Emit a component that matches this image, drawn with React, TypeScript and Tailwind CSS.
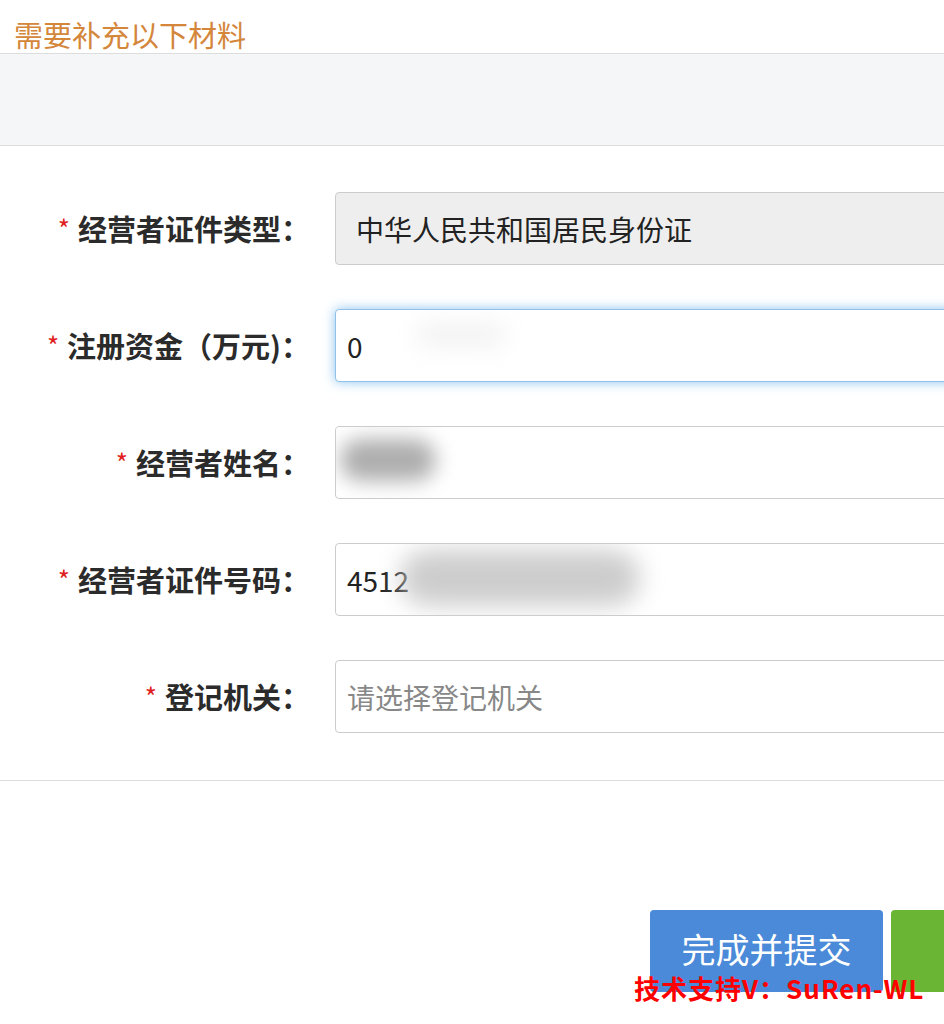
import React from 'react';

const cjk = '"Noto Sans CJK SC", "Noto Sans", sans-serif';

type Row = {
  label: string;
  value?: string;
  placeholder?: string;
  variant?: 'readonly' | 'focus' | 'plain';
  smudge?: React.ReactNode;
};

const rows: Row[] = [
  { label: '经营者证件类型：', value: '中华人民共和国居民身份证', variant: 'readonly' },
  {
    label: '注册资金（万元)：',
    value: '0',
    variant: 'focus',
    smudge: <div className="absolute left-[80px] top-[14px] h-[22px] w-[90px] rounded-full bg-[#dddddd]/40 blur-md" />,
  },
  {
    label: '经营者姓名：',
    value: '',
    smudge: (
      <>
        <div className="absolute left-[-10px] top-[-16px] h-[40px] w-[180px] rounded-full bg-white blur-md" />
        <div className="absolute left-[4px] top-[12px] h-[42px] w-[96px] rounded-full bg-[#9a9a9a]/80 blur-[10px]" />
      </>
    ),
  },
  {
    label: '经营者证件号码：',
    value: '4512',
    smudge: (
      <>
        <div className="absolute left-[90px] top-[-20px] h-[50px] w-[300px] rounded-full bg-white blur-md" />
        <div className="absolute left-[64px] top-[6px] h-[56px] w-[240px] rounded-full bg-[#c8c8c8]/90 blur-[12px]" />
      </>
    ),
  },
  { label: '登记机关：', placeholder: '请选择登记机关' },
];

function FormRow({ row }: { row: Row }) {
  const box =
    row.variant === 'readonly'
      ? 'bg-[#eeeeee] border-[#cccccc] pl-[20px]'
      : row.variant === 'focus'
        ? 'bg-white border-[#8fc1ea] shadow-[0_0_12px_rgba(102,175,233,0.75)] pl-[11px]'
        : 'bg-white border-[#cccccc] pl-[11px]';
  return (
    <div className="flex items-center">
      <div className="w-[310px] shrink-0 text-right text-[29px] font-bold text-[#2b2b2b]">
        <span className="relative top-[-2px] mr-[8px] text-[26px] font-normal text-[#e02020]">*</span>
        {row.label}
      </div>
      <div
        className={`relative ml-[25px] flex h-[73px] w-[700px] shrink-0 items-center overflow-hidden rounded-[4px] border text-[28px] ${box}`}
      >
        {row.value ? (
          <span className="text-[#222222]">{row.value}</span>
        ) : (
          <span className="text-[#888888]">{row.placeholder}</span>
        )}
        {row.smudge}
      </div>
    </div>
  );
}

export default function App() {
  return (
    <div className="relative h-[1024px] w-[944px] overflow-hidden bg-white" style={{ fontFamily: cjk }}>
      <div className="flex h-[54px] items-end border-b border-[#dddddd] pb-[4px] pl-[14px]">
        <h1 className="text-[29px] leading-none font-normal text-[#d4863a]">需要补充以下材料</h1>
      </div>
      <div className="h-[92px] border-b border-[#dddddd] bg-[#f5f6f7]" />
      <div className="flex flex-col gap-[44px] border-b border-[#dddddd] pt-[46px] pb-[47px]">
        {rows.map((row) => (
          <FormRow key={row.label} row={row} />
        ))}
      </div>
      <div className="flex gap-[8px] pt-[129px] pl-[650px]">
        <button className="h-[82px] w-[233px] shrink-0 rounded-[4px] bg-[#4a8ad8] pb-[6px] text-[34px] text-white">
          完成并提交
        </button>
        <button className="h-[82px] w-[120px] shrink-0 rounded-[4px] bg-[#6ab534]" />
      </div>
      <div className="absolute top-[968px] left-[634px] text-[26px] font-bold tracking-[1px] text-[#ff0000]">
        技术支持V：SuRen-WL
      </div>
    </div>
  );
}
